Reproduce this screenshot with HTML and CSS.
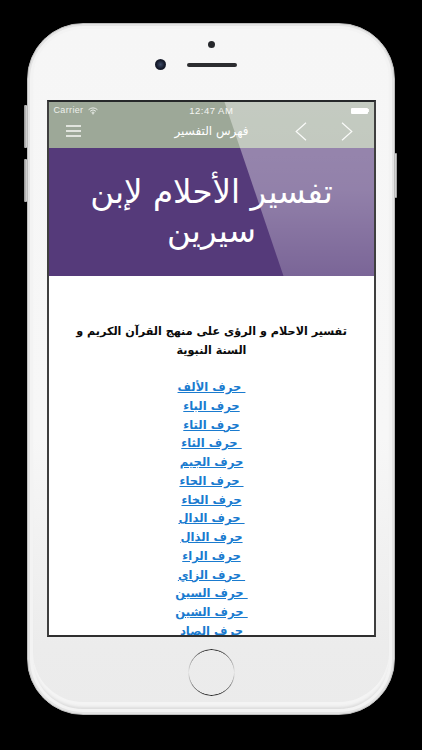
FILE: index.html
```html
<!DOCTYPE html>
<html lang="ar">
<head>
<meta charset="utf-8">
<title>تفسير الأحلام لإبن سيرين</title>
<link rel="stylesheet" href="styles.css">
</head>
<body>
<div class="phone">
  <span class="side-btn left-top"></span>
  <span class="side-btn left-bottom"></span>
  <span class="side-btn right"></span>
  <div class="rim">
    <div class="top-bezel">
      <span class="sensor"></span>
      <div class="cam-row"><span class="camera"></span><span class="speaker"></span></div>
    </div>
    <div class="screen">
      <div class="status">
        <div class="carrier">Carrier
          <svg class="wifi" width="10" height="8" viewBox="0 0 11 8"><path d="M.6 2.6a7 7 0 0 1 9.8 0M2.3 4.3a4.6 4.6 0 0 1 6.4 0M3.9 5.9a2.3 2.3 0 0 1 3.2 0" fill="none" stroke="#f1f3ef" stroke-width="1"/><path d="M5.5 8 4.4 6.8a1.6 1.6 0 0 1 2.2 0z" fill="#f1f3ef"/></svg>
        </div>
        <div class="time">12:47 AM</div>
        <div class="battery"><span class="cell"></span><span class="tip"></span></div>
      </div>
      <nav class="navbar">
        <svg class="menu" width="15" height="12" viewBox="0 0 15 12"><path d="M0 1h15M0 6h15M0 11h15" stroke="#f7f8f5" stroke-width="1.5"/></svg>
        <div class="nav-title" dir="rtl">فهرس التفسير</div>
        <div class="arrows">
          <svg width="12" height="19" viewBox="0 0 12 19"><path d="M11 .8 1.2 9.5 11 18.2" fill="none" stroke="#f7f8f5" stroke-width="1.2"/></svg>
          <svg width="12" height="19" viewBox="0 0 12 19"><path d="M1 .8l9.8 8.7L1 18.2" fill="none" stroke="#f7f8f5" stroke-width="1.2"/></svg>
        </div>
      </nav>
      <header class="hero"><h1 dir="rtl">تفسير الأحلام لإبن سيرين</h1></header>
      <span class="sheen"></span>
      <main class="content" dir="rtl">
        <p class="intro">تفسير الاحلام و الرؤى على منهج القرآن الكريم و السنة النبوية</p>
        <ul class="letters">
          <li><a href="#">&nbsp;حرف الألف</a></li>
          <li><a href="#">حرف الباء</a></li>
          <li><a href="#">حرف التاء</a></li>
          <li><a href="#">&nbsp;حرف الثاء</a></li>
          <li><a href="#">حرف الجيم</a></li>
          <li><a href="#">&nbsp;حرف الحاء</a></li>
          <li><a href="#">حرف الخاء</a></li>
          <li><a href="#">&nbsp;حرف الدال</a></li>
          <li><a href="#">حرف الذال</a></li>
          <li><a href="#">حرف الراء</a></li>
          <li><a href="#">&nbsp;حرف الزاي</a></li>
          <li><a href="#">&nbsp;حرف السين</a></li>
          <li><a href="#">&nbsp;حرف الشين</a></li>
          <li><a href="#">حرف الصاد</a></li>
        </ul>
      </main>
    </div>
    <div class="bottom-bezel"><span class="home"></span></div>
  </div>
</div>
</body>
</html>
```
FILE: styles.css
```css
* { box-sizing: border-box; }
html, body { margin: 0; height: 750px; overflow: hidden; background: #000; }
body { padding: 23px 0 0 27px; font-family: "DejaVu Sans", "Noto Sans", sans-serif; }

.phone { position: relative; width: 368px; height: 692px; }

.rim {
  width: 100%; height: 100%;
  padding: 0 18px 0 19px;
  border-radius: 56px;
  background: linear-gradient(#f6f6f6 0, #f7f7f7 60%, #ececec 90%, #ebebeb 100%);
  border: 1px solid #bdbdbd;
  box-shadow: inset 0 0 0 2px #e4e4e4, inset 0 0 0 5px #f3f3f3, inset 0 -4px 3px 3px #dcdcdc, inset 0 -7px 0 5px #f4f4f4;
  display: flex; flex-direction: column;
}

.side-btn { position: absolute; width: 3px; background: linear-gradient(90deg, #8d8d8d, #dcdcdc); border-radius: 1px; }
.left-top { left: -3px; top: 82px; height: 43px; }
.left-bottom { left: -3px; top: 136px; height: 43px; }
.right { right: -2px; top: 130px; height: 45px; background: linear-gradient(90deg, #e8e8e8, #8d8d8d); width: 2px; }

.top-bezel {
  height: 76px; flex: none;
  display: flex; flex-direction: column; align-items: center;
  padding-top: 17px;
}
.sensor { width: 7px; height: 7px; border-radius: 50%; background: #26282c; }
.cam-row { position: relative; margin-top: 12px; width: 50px; height: 10px; display: flex; align-items: center; justify-content: center; }
.camera {
  position: absolute; left: -32px; top: -1px;
  width: 11px; height: 11px; border-radius: 50%;
  background: radial-gradient(circle at 50% 50%, #3d4a66 0, #14192a 55%, #2a2c33 100%);
}
.speaker { width: 50px; height: 3.5px; border-radius: 2px; background: #2c2d30; }

.screen {
  position: relative; flex: 1; min-height: 0; overflow: hidden;
  background: #fff;
  border: 2px solid #3f3f3f;
  border-top-color: #26282a;
  border-bottom-color: #2f2f2f;
}

.status {
  height: 16px; background: #9da898; color: #eef0ec;
  display: grid; grid-template-columns: 1fr auto 1fr; align-items: center;
  padding: 1px 5px 0 4.5px;
  font: 9px/1 "Liberation Sans", Arial, sans-serif;
  letter-spacing: .35px;
}
.carrier { display: flex; align-items: center; gap: 5px; }
.time { color: #f4f5f2; font-size: 9.5px; letter-spacing: .5px; }
.battery { justify-self: end; display: flex; align-items: center; }
.cell { width: 17px; height: 6px; background: #fff; border-radius: 1px; }
.tip { width: 1px; height: 3px; background: #f4f5f2; }

.navbar {
  height: 30px; background: #9da898;
  display: grid; grid-template-columns: 1fr auto 1fr; align-items: center;
  padding: 0 16.5px 4px;
}
.menu { display: block; }
.nav-title { color: #fff; font-size: 12px; line-height: 1; }
.arrows { justify-self: end; display: flex; gap: 34px; margin-right: 5px; }
.arrows svg { display: block; }

.hero {
  height: 128px;
  background: #553a7a;
  padding: 25px 29px 0;
}
.hero h1 {
  margin: 0; text-align: center; color: #fff;
  font-size: 32.5px; line-height: 39px; font-weight: 400;
}

.sheen {
  position: absolute; left: 0; top: 0; width: 100%; height: 174px;
  background: linear-gradient(rgba(255,255,255,.4) 0, rgba(255,255,255,.36) 50%, rgba(255,255,255,.22) 100%);
  clip-path: polygon(175.5px 0, 100% 0, 100% 100%, 234.5px 100%);
}

.content { padding: 46px 14.5px 0; text-align: center; }
.intro {
  margin: 0 0 18px; color: #0a0a0a;
  font-size: 11.2px; line-height: 19px; font-weight: 700;
}
.letters { list-style: none; margin: 0; padding: 0; font-size: 11.6px; line-height: 18.75px; font-weight: 700; }
.letters a { color: #1a7bcf; text-decoration: underline; }

.bottom-bezel { flex: none; height: 77px; display: flex; justify-content: center; padding-top: 12px; }
.home {
  width: 47px; height: 47px; border-radius: 50%;
  background: conic-gradient(#2e2e2e 0, #b0b0b0 60deg, #e4e4e4 90deg, #8a8a8a 130deg, #2b2b2b 180deg, #9a9a9a 235deg, #e4e4e4 270deg, #a0a0a0 310deg, #2e2e2e 360deg);
  -webkit-mask: radial-gradient(circle, transparent 22px, #000 22.5px);
  mask: radial-gradient(circle, transparent 22px, #000 22.5px);
}
```
